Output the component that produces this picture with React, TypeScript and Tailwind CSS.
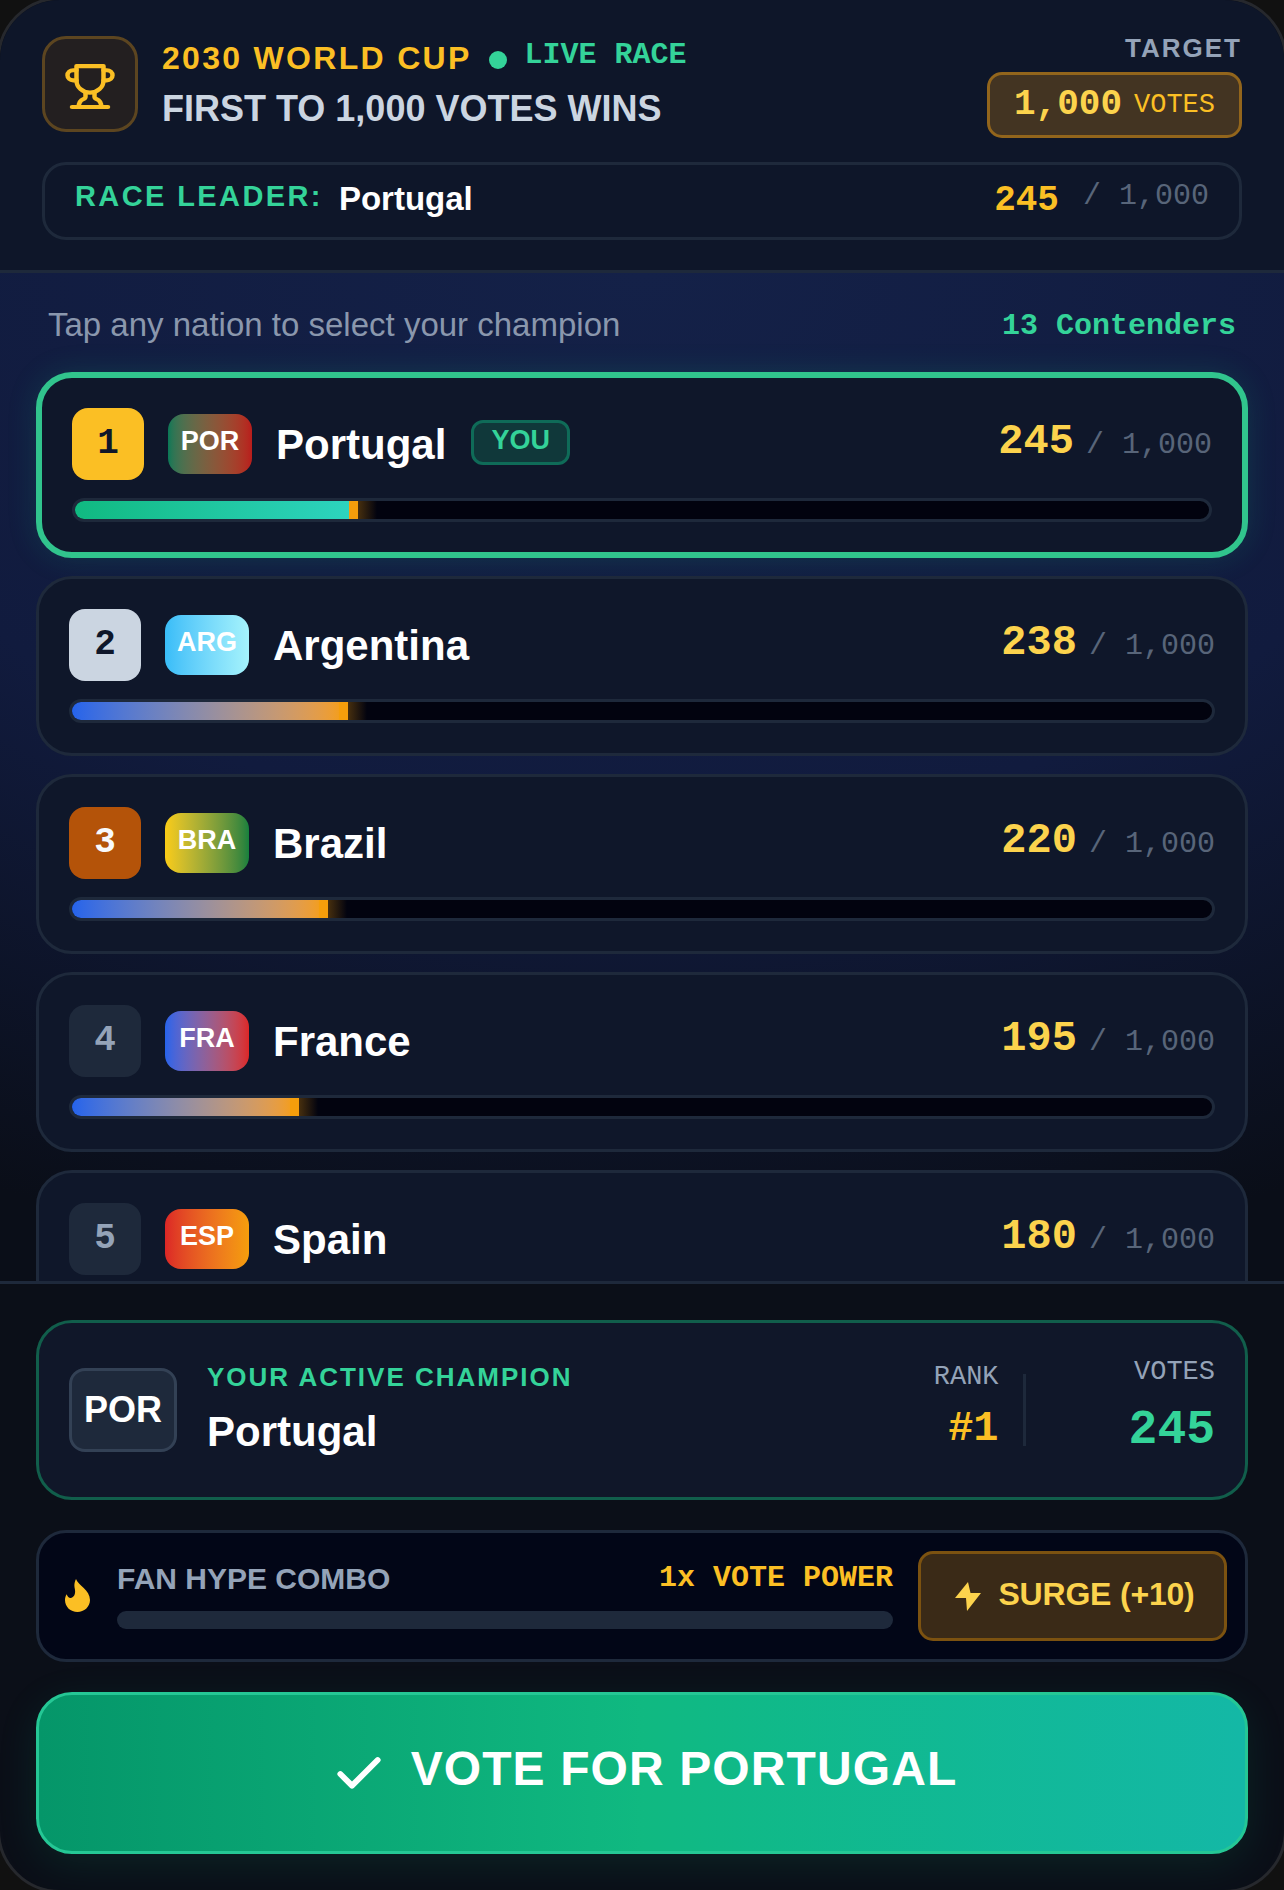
import { Check } from "lucide-react";

const sans = "font-['Liberation_Sans',Arial,sans-serif]";
const mono = "font-['Liberation_Mono','Courier_New',monospace]";

interface Nation {
  rank: number;
  code: string;
  name: string;
  votes: number;
  rankClass: string;
  flagClass: string;
  you?: boolean;
}

const nations: Nation[] = [
  {
    rank: 1,
    code: "POR",
    name: "Portugal",
    votes: 245,
    rankClass: "bg-[#fbbf24] text-[#0f172a]",
    flagClass: "bg-gradient-to-r from-[#047857] to-[#b91c1c]",
    you: true,
  },
  {
    rank: 2,
    code: "ARG",
    name: "Argentina",
    votes: 238,
    rankClass: "bg-[#cbd5e1] text-[#0f172a]",
    flagClass: "bg-gradient-to-r from-[#38bdf8] to-[#a5f3fc]",
  },
  {
    rank: 3,
    code: "BRA",
    name: "Brazil",
    votes: 220,
    rankClass: "bg-[#b45309] text-[#f8fafc]",
    flagClass: "bg-gradient-to-r from-[#facc15] to-[#15803d]",
  },
  {
    rank: 4,
    code: "FRA",
    name: "France",
    votes: 195,
    rankClass: "bg-[#1e293b] text-[#94a3b8]",
    flagClass: "bg-gradient-to-r from-[#2563eb] to-[#dc2626]",
  },
  {
    rank: 5,
    code: "ESP",
    name: "Spain",
    votes: 180,
    rankClass: "bg-[#1e293b] text-[#94a3b8]",
    flagClass: "bg-gradient-to-r from-[#dc2626] to-[#f59e0b]",
  },
];

const TrophyIcon = () => (
  <svg
    width="54"
    height="49"
    viewBox="0 0 24 24"
    preserveAspectRatio="none"
    fill="none"
    stroke="#fbbf24"
    strokeWidth="2"
    strokeLinecap="round"
    strokeLinejoin="round"
    className="mt-[5px]"
  >
    <path d="M6 9H4.500a2.500 2.500 0 0 1 0-5H6" />
    <path d="M18 9h1.500a2.500 2.500 0 0 0 0-5H18" />
    <path d="M4 22h16" />
    <path d="M10 14.660V17c0 .55-.47.98-.97 1.210C7.850 18.750 7 20.240 7 22" />
    <path d="M14 14.660V17c0 .55.47.98.97 1.210C16.150 18.750 17 20.240 17 22" />
    <path d="M18 2H6v7a6 6 0 0 0 12 0V2Z" />
  </svg>
);

const NationCard = ({ nation }: { nation: Nation }) => {
  const { you } = nation;
  return (
    <div
      className={`shrink-0 rounded-[36px] bg-[#0f172a] ${
        you
          ? "border-[6px] border-[#31c48d] shadow-[0_0_30px_rgba(16,185,129,0.16)]"
          : "border-[3px] border-[#1e293b]"
      } p-[30px]`}
    >
      <div className="flex h-[72px] items-center">
        <div
          className={`flex h-[72px] w-[72px] items-center justify-center rounded-[16px] pb-[1px] ${mono} text-[36px] font-bold ${nation.rankClass}`}
        >
          {nation.rank}
        </div>
        <div
          className={`ml-[24px] flex h-[60px] w-[84px] items-center justify-center rounded-[16px] pb-[6px] ${sans} text-[27px] font-bold text-white ${nation.flagClass}`}
        >
          {nation.code}
        </div>
        <div className={`ml-[24px] ${sans} text-[42px] font-bold text-white`}>
          {nation.name}
        </div>
        {you && (
          <div
            className={`mb-[4px] ml-[25px] flex h-[45px] w-[99px] items-center justify-center rounded-[12px] border-[3px] border-[#0f6b58] bg-[#10383a] pb-[3px] ${sans} text-[27px] font-bold text-[#34d399]`}
          >
            YOU
          </div>
        )}
        <div className={`ml-auto flex items-baseline pb-[3px] ${mono}`}>
          <span className="text-[42px] font-bold text-[#fcd34d]">
            {nation.votes}
          </span>
          <span className="ml-[12px] text-[30px] text-[#586579]">/ 1,000</span>
        </div>
      </div>
      <div className="mt-[18px] h-[24px] rounded-full border-[3px] border-[#1e293b] bg-[#02030f]">
        <div
          className={`relative h-full rounded-l-full ${
            you
              ? "bg-gradient-to-r from-[#10b981] to-[#2dd4bf]"
              : "bg-gradient-to-r from-[#2563eb] to-[#f59e0b]"
          }`}
          style={{ width: `${nation.votes / 10}%` }}
        >
          <div className="absolute right-[-5px] top-0 h-full w-[9px] bg-[#f59e0b]" />
          <div className="absolute left-[calc(100%+4px)] top-0 h-full w-[20px] bg-gradient-to-r from-[#f59e0b]/30 to-transparent" />
        </div>
      </div>
    </div>
  );
};

const App = () => {
  return (
    <div className="h-[1890px] w-[1284px] overflow-hidden bg-[#111111]">
      <div className="-m-[3px] flex h-[1896px] w-[1290px] flex-col overflow-hidden rounded-[63px] border-[3px] border-[#26282d] bg-[#0b0f18]">
        <header className="h-[273px] shrink-0 border-b-[3px] border-[#1e293b] bg-[#0e1629] px-[42px] pt-[36px]">
          <div className="flex items-start justify-between">
            <div className="flex items-start">
              <div className="flex h-[96px] w-[96px] items-center justify-center rounded-[24px] border-[3px] border-[#5c4520] bg-[#231f20]">
                <TrophyIcon />
              </div>
              <div className="ml-[24px] pt-[1px]">
                <div className="flex h-[42px] items-center">
                  <span
                    className={`${sans} text-[32px] font-bold tracking-[2.300px] text-[#fbbf24]`}
                  >
                    2030 WORLD CUP
                  </span>
                  <span className="ml-[17px] mt-[4px] h-[18px] w-[18px] rounded-full bg-[#34d399]" />
                  <span
                    className={`ml-[18px] mb-[6px] ${mono} text-[30px] font-bold text-[#34d399]`}
                  >
                    LIVE RACE
                  </span>
                </div>
                <div
                  className={`mt-[8px] ${sans} text-[36px] font-bold leading-[44px] text-[#cbd5e1]`}
                >
                  FIRST TO 1,000 VOTES WINS
                </div>
              </div>
            </div>
            <div className="flex flex-col items-end">
              <div
                className={`${sans} text-[26px] font-bold leading-[24px] tracking-[2px] text-[#94a3b8]`}
              >
                TARGET
              </div>
              <div className="mt-[12px] flex h-[66px] w-[255px] items-center justify-center rounded-[15px] border-[3px] border-[#92651c] bg-[#433422]">
                <span
                  className={`${mono} text-[36px] font-bold text-[#fcd34d]`}
                >
                  1,000
                </span>
                <span
                  className={`ml-[12px] ${mono} text-[27px] text-[#fbbf24]`}
                >
                  VOTES
                </span>
              </div>
            </div>
          </div>
          <div className="mt-[24px] flex h-[78px] items-center rounded-[24px] border-[3px] border-[#1e293b] px-[30px]">
            <span
              className={`mb-[9px] ${sans} text-[29px] font-bold tracking-[2.400px] text-[#34d399]`}
            >
              RACE LEADER:
            </span>
            <span
              className={`mb-[4px] ml-[16px] ${sans} text-[33px] font-bold text-white`}
            >
              Portugal
            </span>
            <div className={`ml-auto flex items-start ${mono}`}>
              <span className="text-[36px] font-bold text-[#fbbf24]">245</span>
              <span className="ml-[24px] text-[30px] text-[#586579]">
                / 1,000
              </span>
            </div>
          </div>
        </header>

        <main className="flex h-[1008px] shrink-0 flex-col gap-[18px] overflow-hidden bg-[radial-gradient(ellipse_120%_100%_at_50%_0%,#142148_0%,#111b3e_55%,#0a0e18_100%)] px-[36px]">
          <div className="flex h-[81px] shrink-0 items-end justify-between px-[12px] pb-[5px]">
            <span className={`${sans} text-[33px] text-[#8a97ad]`}>
              Tap any nation to select your champion
            </span>
            <span className={`${mono} text-[30px] font-bold text-[#34d399]`}>
              13 Contenders
            </span>
          </div>
          {nations.map((nation) => (
            <NationCard key={nation.code} nation={nation} />
          ))}
        </main>

        <footer className="flex-1 border-t-[3px] border-[#1e293b] px-[36px] pt-[36px]">
          <div className="flex h-[180px] items-center rounded-[36px] border-[3px] border-[#115e4b] bg-[#101729] px-[30px]">
            <div
              className={`flex h-[84px] w-[108px] items-center justify-center rounded-[16px] border-[3px] border-[#334155] bg-[#1e293b] ${sans} text-[36px] font-bold text-white`}
            >
              POR
            </div>
            <div className="ml-[30px]">
              <div
                className={`${sans} text-[26px] font-bold tracking-[2px] text-[#34d399]`}
              >
                YOUR ACTIVE CHAMPION
              </div>
              <div
                className={`mt-[3px] ${sans} text-[42px] font-bold text-white`}
              >
                Portugal
              </div>
            </div>
            <div className="ml-auto flex items-center">
              <div className={`mb-[2px] flex flex-col items-end ${mono}`}>
                <span className="text-[27px] text-[#94a3b8]">RANK</span>
                <span className="text-[42px] font-bold text-[#fbbf24]">
                  #1
                </span>
              </div>
              <div className="ml-[24px] h-[72px] w-[3px] bg-[#1e293b]" />
              <div className={`mb-[2px] ml-[103px] flex flex-col items-end ${mono}`}>
                <span className="text-[27px] text-[#94a3b8]">VOTES</span>
                <span className="mt-[1px] text-[48px] font-bold text-[#34d399]">
                  245
                </span>
              </div>
            </div>
          </div>

          <div className="mt-[30px] flex h-[132px] items-center rounded-[30px] border-[3px] border-[#1e293b] bg-[#020617] pl-[26px] pr-[18px]">
            <svg
              width="25"
              height="33"
              viewBox="0 0 25 33"
              fill="#fbbf24"
              className="mb-[2px] shrink-0"
            >
              <path d="M11 0C13 6 25 11 25 21C25 28 19 33 12.500 33C5.500 33 0 28 0 21C0 19 .6 17 1.700 15.300C2.500 18 4.500 19.500 6.500 18.800C9.500 17.800 10.500 14 10 11C9.500 8 8.500 5 11 0Z" />
            </svg>
            <div className="mb-[7px] ml-[27px] w-[776px]">
              <div className="flex items-center justify-between">
                <span
                  className={`${sans} text-[30px] font-bold text-[#94a3b8]`}
                >
                  FAN HYPE COMBO
                </span>
                <span
                  className={`${mono} text-[30px] font-bold text-[#fbbf24]`}
                >
                  1x VOTE POWER
                </span>
              </div>
              <div className="mt-[10px] h-[18px] rounded-full bg-[#1e293b]" />
            </div>
            <div
              className={`ml-[25px] flex h-[90px] w-[309px] items-center justify-center rounded-[15px] border-[3px] border-[#7c5210] bg-[#3a2a17] pl-[5px] ${sans} text-[32px] font-bold tracking-[-0.200px] text-[#fcd34d]`}
            >
              <svg width="26" height="29" viewBox="0 0 26 29" fill="#fcd34d">
                <path d="M13 0 0 16h11l1 13 14-18H15.500z" />
              </svg>
              <span className="mb-[5px] ml-[17px]">SURGE (+10)</span>
            </div>
          </div>

          <div className="mt-[30px] flex h-[162px] items-center justify-center rounded-[36px] border-[3px] border-[#25c795] bg-gradient-to-r from-[#059669] via-[#10b981] to-[#14b8a6] pb-[8px] pl-[4px] shadow-[0_10px_40px_rgba(16,185,129,0.12)]">
            <Check
              size={56}
              strokeWidth={2.5}
              className="mt-[10px] text-white"
            />
            <span
              className={`ml-[24px] ${sans} text-[48px] font-bold tracking-[1.100px] text-white`}
            >
              VOTE FOR PORTUGAL
            </span>
          </div>
        </footer>
      </div>
    </div>
  );
};

export default App;
